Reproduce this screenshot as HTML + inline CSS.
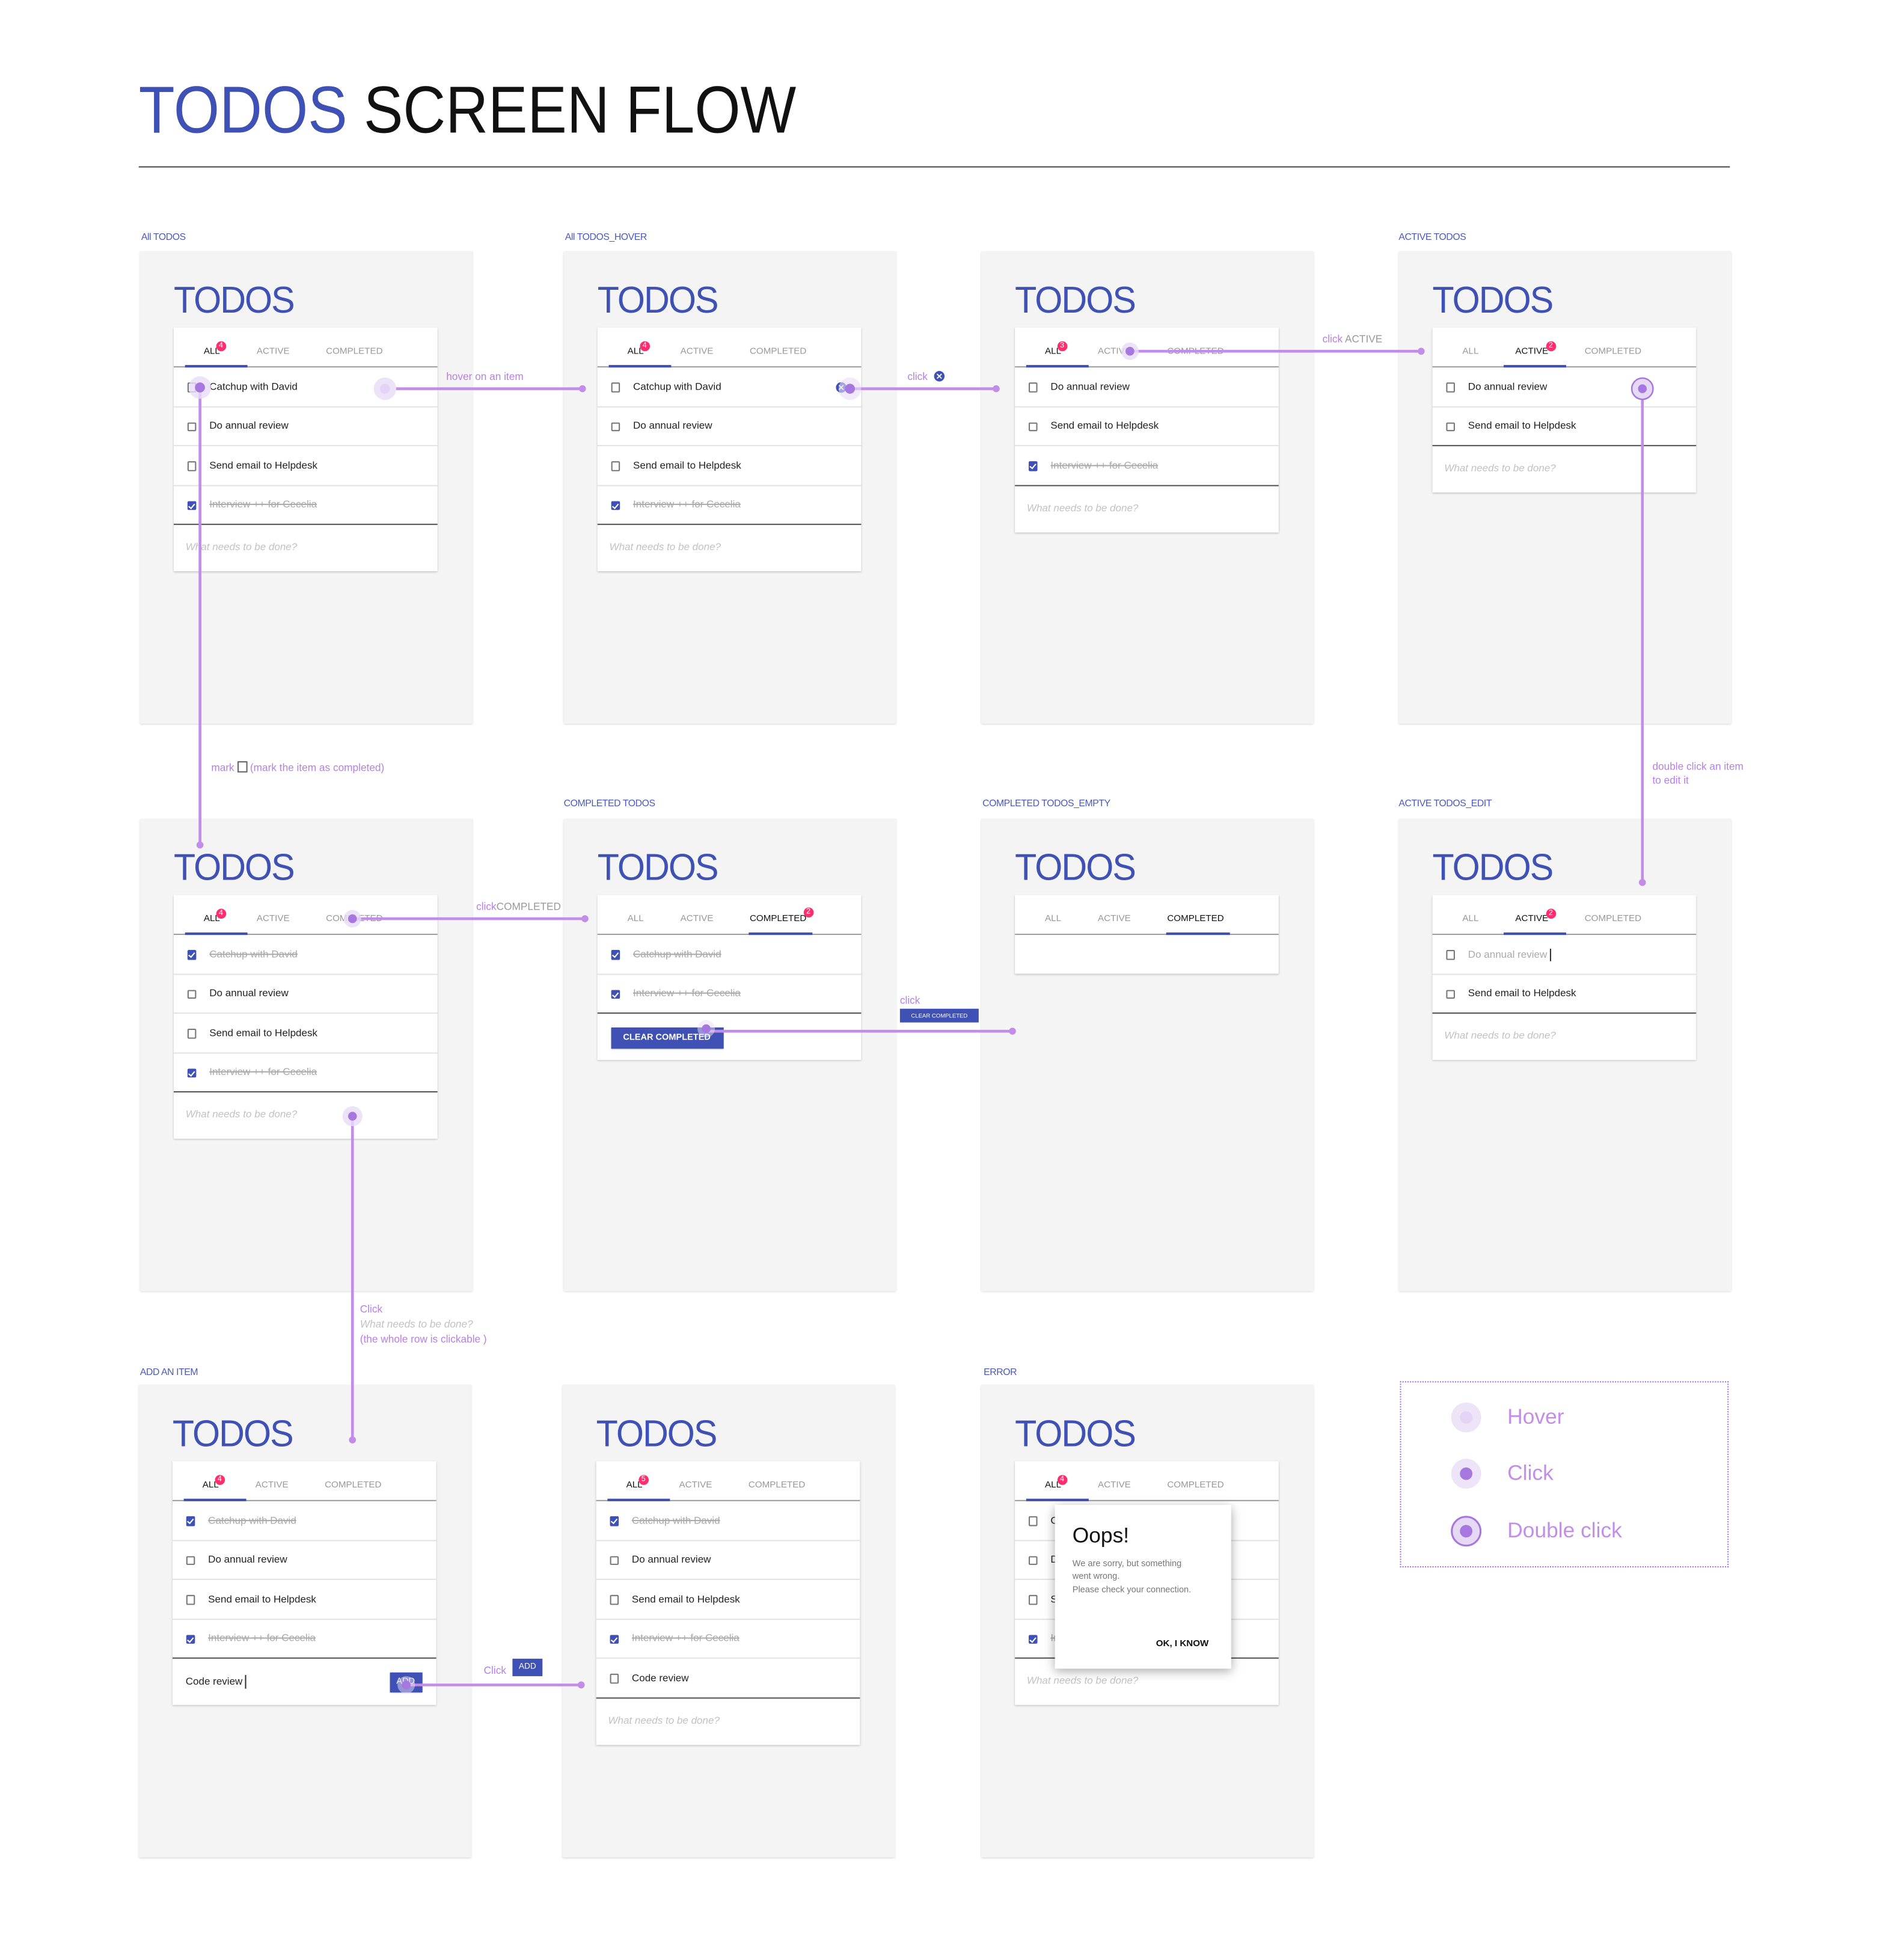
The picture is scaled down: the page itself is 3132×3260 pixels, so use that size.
<!DOCTYPE html>
<html><head><meta charset="utf-8"><style>
html,body{margin:0;padding:0;background:#fff;}
body{width:3132px;height:3260px;overflow:hidden;position:relative;font-family:"Liberation Sans",sans-serif;}
#s{position:absolute;left:0;top:0;width:1507px;height:1568px;transform:scale(2.079);transform-origin:0 0;}
.abs{position:absolute;}
.lbl{position:absolute;font-size:7.6px;color:#4a58c0;white-space:nowrap;letter-spacing:-0.2px;}
.card{position:absolute;width:266px;height:378px;background:#f4f4f4;box-shadow:0 0.5px 1.5px rgba(0,0,0,.18);}
.t{position:absolute;left:27px;top:25px;font-size:30px;line-height:30px;color:#3f51b5;letter-spacing:-1px;transform:scaleX(0.95);transform-origin:0 0;}
.p{position:absolute;left:26.5px;top:61px;width:211px;background:#fff;box-shadow:0 0.6px 1.6px rgba(0,0,0,.22);}
.tabs{position:relative;height:31px;border-bottom:0.8px solid #9e9e9e;}
.tab{position:absolute;top:14px;font-size:7.3px;line-height:9px;color:#999;text-align:center;white-space:nowrap;}
.tab.on{color:#111;}
.ta{left:11px;width:40px;} .tb{left:55px;width:50px;} .tc{left:112px;width:66px;}
.ul{position:absolute;bottom:-0.8px;height:1.5px;background:#3f51b5;}
.bd{position:absolute;width:8.5px;height:8.5px;border-radius:50%;background:#ff2e6e;color:#fff;font-size:6px;line-height:8.5px;text-align:center;}
.r{position:relative;height:31.6px;border-bottom:0.6px solid #e3e3e3;box-sizing:border-box;}
.r.last{border-bottom:0.9px solid #555;}
.cb{position:absolute;left:11px;top:12px;width:7.5px;height:7.5px;border:1px solid #777;box-sizing:border-box;border-radius:1px;background:#fff;}
.cb.on{background:#3f51b5;border-color:#3f51b5;}
.cb.on:after{content:"";position:absolute;left:1.6px;top:0.3px;width:1.8px;height:3.6px;border:solid #fff;border-width:0 0.9px 0.9px 0;transform:rotate(40deg);}
.tx{position:absolute;left:29px;top:10.5px;font-size:8.2px;line-height:10px;color:#222;white-space:nowrap;}
.dn{color:#aaa;text-decoration:line-through;}
.in{position:relative;height:37px;}
.ph{position:absolute;left:10px;top:13px;font-size:8.2px;font-style:italic;color:#c2c2c2;white-space:nowrap;}
.ann{position:absolute;font-size:8.3px;color:#b77fe6;white-space:nowrap;}
</style></head><body><div id="s">

<div class="abs" style="left:111px;top:62px;font-size:53px;line-height:53px;white-space:nowrap;transform:scaleX(0.89);transform-origin:0 0;"><span style="color:#3f51b5">TODOS</span> <span style="color:#111">SCREEN FLOW</span></div>
<div class="abs" style="left:111px;top:133px;width:1273px;height:1.4px;background:#4a4a4a"></div>

<div class="lbl" style="left:113px;top:185px">All TODOS</div>
<div class="lbl" style="left:452px;top:185px">All TODOS_HOVER</div>
<div class="lbl" style="left:1119px;top:185px">ACTIVE TODOS</div>
<div class="lbl" style="left:451px;top:638px">COMPLETED TODOS</div>
<div class="lbl" style="left:786px;top:638px">COMPLETED TODOS_EMPTY</div>
<div class="lbl" style="left:1119px;top:638px">ACTIVE TODOS_EDIT</div>
<div class="lbl" style="left:112px;top:1093px">ADD AN ITEM</div>
<div class="lbl" style="left:787px;top:1093px">ERROR</div>

<!-- A -->
<div class="card" style="left:112px;top:201px"><div class="t">TODOS</div><div class="p">
<div class="tabs"><span class="tab ta on">ALL</span><span class="tab tb">ACTIVE</span><span class="tab tc">COMPLETED</span><div class="ul" style="left:9px;width:50px"></div><div class="bd" style="left:34px;top:10.5px">4</div></div>
<div class="r"><div class="cb"></div><div class="tx">Catchup with David</div></div>
<div class="r"><div class="cb"></div><div class="tx">Do annual review</div></div>
<div class="r"><div class="cb"></div><div class="tx">Send email to Helpdesk</div></div>
<div class="r last"><div class="cb on"></div><div class="tx dn">Interview ++ for Cecelia</div></div>
<div class="in"><div class="ph">What needs to be done?</div></div></div></div>

<!-- B -->
<div class="card" style="left:451px;top:201px"><div class="t">TODOS</div><div class="p">
<div class="tabs"><span class="tab ta on">ALL</span><span class="tab tb">ACTIVE</span><span class="tab tc">COMPLETED</span><div class="ul" style="left:9px;width:50px"></div><div class="bd" style="left:34px;top:10.5px">4</div></div>
<div class="r"><div class="cb"></div><div class="tx">Catchup with David</div></div>
<div class="r"><div class="cb"></div><div class="tx">Do annual review</div></div>
<div class="r"><div class="cb"></div><div class="tx">Send email to Helpdesk</div></div>
<div class="r last"><div class="cb on"></div><div class="tx dn">Interview ++ for Cecelia</div></div>
<div class="in"><div class="ph">What needs to be done?</div></div></div></div>

<!-- C -->
<div class="card" style="left:785px;top:201px"><div class="t">TODOS</div><div class="p">
<div class="tabs"><span class="tab ta on">ALL</span><span class="tab tb">ACTIVE</span><span class="tab tc">COMPLETED</span><div class="ul" style="left:9px;width:50px"></div><div class="bd" style="left:34px;top:10.5px">3</div></div>
<div class="r"><div class="cb"></div><div class="tx">Do annual review</div></div>
<div class="r"><div class="cb"></div><div class="tx">Send email to Helpdesk</div></div>
<div class="r last"><div class="cb on"></div><div class="tx dn">Interview ++ for Cecelia</div></div>
<div class="in"><div class="ph">What needs to be done?</div></div></div></div>

<!-- D -->
<div class="card" style="left:1119px;top:201px"><div class="t">TODOS</div><div class="p">
<div class="tabs"><span class="tab ta">ALL</span><span class="tab tb on">ACTIVE</span><span class="tab tc">COMPLETED</span><div class="ul" style="left:57px;width:50px"></div><div class="bd" style="left:91px;top:10.5px">2</div></div>
<div class="r"><div class="cb"></div><div class="tx">Do annual review</div></div>
<div class="r last"><div class="cb"></div><div class="tx">Send email to Helpdesk</div></div>
<div class="in"><div class="ph">What needs to be done?</div></div></div></div>

<!-- E -->
<div class="card" style="left:112px;top:655px"><div class="t">TODOS</div><div class="p">
<div class="tabs"><span class="tab ta on">ALL</span><span class="tab tb">ACTIVE</span><span class="tab tc">COMPLETED</span><div class="ul" style="left:9px;width:50px"></div><div class="bd" style="left:34px;top:10.5px">4</div></div>
<div class="r"><div class="cb on"></div><div class="tx dn">Catchup with David</div></div>
<div class="r"><div class="cb"></div><div class="tx">Do annual review</div></div>
<div class="r"><div class="cb"></div><div class="tx">Send email to Helpdesk</div></div>
<div class="r last"><div class="cb on"></div><div class="tx dn">Interview ++ for Cecelia</div></div>
<div class="in"><div class="ph">What needs to be done?</div></div></div></div>

<!-- F -->
<div class="card" style="left:451px;top:655px"><div class="t">TODOS</div><div class="p">
<div class="tabs"><span class="tab ta">ALL</span><span class="tab tb">ACTIVE</span><span class="tab tc on">COMPLETED</span><div class="ul" style="left:121px;width:51px"></div><div class="bd" style="left:165px;top:9.5px">2</div></div>
<div class="r"><div class="cb on"></div><div class="tx dn">Catchup with David</div></div>
<div class="r last"><div class="cb on"></div><div class="tx dn">Interview ++ for Cecelia</div></div>
<div class="in"><div class="abs" style="left:11px;top:10.5px;width:90px;height:17px;background:#3f51b5;box-shadow:0 0.6px 1px rgba(0,0,0,.3);color:#fff;font-size:7px;line-height:17px;text-align:center;font-weight:bold">CLEAR COMPLETED</div></div></div></div>

<!-- G -->
<div class="card" style="left:785px;top:655px"><div class="t">TODOS</div><div class="p">
<div class="tabs"><span class="tab ta">ALL</span><span class="tab tb">ACTIVE</span><span class="tab tc on">COMPLETED</span><div class="ul" style="left:121px;width:51px"></div></div>
<div style="height:31px"></div></div></div>

<!-- H -->
<div class="card" style="left:1119px;top:655px"><div class="t">TODOS</div><div class="p">
<div class="tabs"><span class="tab ta">ALL</span><span class="tab tb on">ACTIVE</span><span class="tab tc">COMPLETED</span><div class="ul" style="left:57px;width:50px"></div><div class="bd" style="left:91px;top:10.5px">2</div></div>
<div class="r"><div class="cb"></div><div class="tx" style="color:#aaa">Do annual review <span style="display:inline-block;width:0.6px;height:10px;background:#333;vertical-align:middle"></span></div></div>
<div class="r last"><div class="cb"></div><div class="tx">Send email to Helpdesk</div></div>
<div class="in"><div class="ph">What needs to be done?</div></div></div></div>

<!-- I -->
<div class="card" style="left:111px;top:1108px"><div class="t">TODOS</div><div class="p">
<div class="tabs"><span class="tab ta on">ALL</span><span class="tab tb">ACTIVE</span><span class="tab tc">COMPLETED</span><div class="ul" style="left:9px;width:50px"></div><div class="bd" style="left:34px;top:10.5px">4</div></div>
<div class="r"><div class="cb on"></div><div class="tx dn">Catchup with David</div></div>
<div class="r"><div class="cb"></div><div class="tx">Do annual review</div></div>
<div class="r"><div class="cb"></div><div class="tx">Send email to Helpdesk</div></div>
<div class="r last"><div class="cb on"></div><div class="tx dn">Interview ++ for Cecelia</div></div>
<div class="in"><div class="tx" style="left:11px;top:13px">Code review <span style="display:inline-block;width:0.6px;height:11px;background:#333;vertical-align:middle"></span></div><div class="abs" style="left:174px;top:10.5px;width:26px;height:16px;background:#3f51b5;color:#fff;font-size:7px;line-height:16px;text-align:center;box-shadow:0 0.6px 1px rgba(0,0,0,.3)">ADD</div></div></div></div>

<!-- J -->
<div class="card" style="left:450px;top:1108px"><div class="t">TODOS</div><div class="p">
<div class="tabs"><span class="tab ta on">ALL</span><span class="tab tb">ACTIVE</span><span class="tab tc">COMPLETED</span><div class="ul" style="left:9px;width:50px"></div><div class="bd" style="left:34px;top:10.5px">5</div></div>
<div class="r"><div class="cb on"></div><div class="tx dn">Catchup with David</div></div>
<div class="r"><div class="cb"></div><div class="tx">Do annual review</div></div>
<div class="r"><div class="cb"></div><div class="tx">Send email to Helpdesk</div></div>
<div class="r"><div class="cb on"></div><div class="tx dn">Interview ++ for Cecelia</div></div>
<div class="r last"><div class="cb"></div><div class="tx">Code review</div></div>
<div class="in"><div class="ph">What needs to be done?</div></div></div></div>

<!-- K -->
<div class="card" style="left:785px;top:1108px"><div class="t">TODOS</div><div class="p">
<div class="tabs"><span class="tab ta on">ALL</span><span class="tab tb">ACTIVE</span><span class="tab tc">COMPLETED</span><div class="ul" style="left:9px;width:50px"></div><div class="bd" style="left:34px;top:10.5px">4</div></div>
<div class="r"><div class="cb"></div><div class="tx">Catchup with David</div></div>
<div class="r"><div class="cb"></div><div class="tx">Do annual review</div></div>
<div class="r"><div class="cb"></div><div class="tx">Send email to Helpdesk</div></div>
<div class="r last"><div class="cb on"></div><div class="tx dn">Interview ++ for Cecelia</div></div>
<div class="in"><div class="ph">What needs to be done?</div></div></div>
<div class="abs" style="left:59px;top:96px;width:141px;height:131px;background:#fff;box-shadow:0 2px 8px rgba(0,0,0,.35)">
<div class="abs" style="left:14px;top:16px;font-size:17px;line-height:18px;color:#111">Oops!</div>
<div class="abs" style="left:14px;top:43px;font-size:7px;line-height:10.4px;color:#777;width:125px">We are sorry, but something<br>went wrong.<br>Please check your connection.</div>
<div class="abs" style="right:18px;top:106px;font-size:7.3px;font-weight:bold;color:#111">OK, I KNOW</div>
</div></div>

<!-- legend -->
<div class="abs" style="left:1120px;top:1105px;width:261px;height:147px;border:1.2px dotted #a874e0"></div>

<svg class="abs" style="left:0;top:0" width="1500" height="1561" viewBox="0 0 1500 1561">
<g stroke="#c18de9" stroke-width="2.2" fill="none">
<line x1="308" y1="311" x2="466" y2="311"/>
<line x1="160" y1="310" x2="160" y2="676"/>
<line x1="680" y1="311" x2="797" y2="311"/>
<line x1="904" y1="281" x2="1137" y2="281"/>
<line x1="1314" y1="311" x2="1314" y2="706"/>
<line x1="282" y1="735" x2="468" y2="735"/>
<line x1="565" y1="825" x2="810" y2="825"/>
<line x1="282" y1="893" x2="282" y2="1152"/>
<line x1="325" y1="1348" x2="465" y2="1348"/>
</g>
<g fill="#c18de9">
<circle cx="466" cy="311" r="2.8"/><circle cx="160" cy="676" r="2.8"/><circle cx="797" cy="311" r="2.8"/><circle cx="1137" cy="281" r="2.8"/><circle cx="1314" cy="706" r="2.8"/><circle cx="468" cy="735" r="2.8"/><circle cx="810" cy="825" r="2.8"/><circle cx="282" cy="1152" r="2.8"/><circle cx="465" cy="1348" r="2.8"/>
</g>
<circle cx="308" cy="311" r="9" fill="#ece3f8"/><circle cx="308" cy="311" r="4" fill="#e3d4f5"/>
<g>
<circle cx="160" cy="310" r="9" fill="#e9dcf7" fill-opacity=".8"/><circle cx="160" cy="310" r="4" fill="#a677de"/>
<circle cx="673" cy="310" r="4.2" fill="#3f51b5"/><path d="M671.2 308.2l3.6 3.6M674.8 308.2l-3.6 3.6" stroke="#fff" stroke-width="0.9"/>
<circle cx="680" cy="311" r="9" fill="#e9dcf7" fill-opacity=".6"/><circle cx="680" cy="311" r="4" fill="#a677de"/>
<circle cx="904" cy="281" r="7" fill="#e9dcf7" fill-opacity=".8"/><circle cx="904" cy="281" r="3.5" fill="#a677de"/>
<circle cx="282" cy="735" r="7" fill="#e9dcf7" fill-opacity=".8"/><circle cx="282" cy="735" r="3.5" fill="#a677de"/>
<circle cx="282" cy="893" r="8" fill="#e9dcf7" fill-opacity=".8"/><circle cx="282" cy="893" r="3.5" fill="#a677de"/>
<circle cx="565" cy="823" r="7" fill="#e9dcf7" fill-opacity=".5"/><circle cx="565" cy="823" r="3.5" fill="#a677de"/>
<circle cx="325" cy="1348" r="7" fill="#e9dcf7" fill-opacity=".5"/><circle cx="325" cy="1348" r="3.5" fill="#a677de"/>
<circle cx="1314" cy="311" r="8.5" fill="#e6d9f6" stroke="#a677de" stroke-width="1.2"/><circle cx="1314" cy="311" r="3.5" fill="#a677de"/>
<circle cx="751.5" cy="301" r="4.2" fill="#3f51b5"/><path d="M749.7 299.2l3.6 3.6M753.3 299.2l-3.6 3.6" stroke="#fff" stroke-width="0.9"/>
</g>
<circle cx="1173" cy="1134" r="12" fill="#ede4f8"/><circle cx="1173" cy="1134" r="5" fill="#e3d4f5"/>
<circle cx="1173" cy="1179" r="12" fill="#ede4f8"/><circle cx="1173" cy="1179" r="5" fill="#a677de"/>
<circle cx="1173" cy="1225" r="11.5" fill="#e6d9f6" stroke="#a677de" stroke-width="1.5"/><circle cx="1173" cy="1225" r="5" fill="#a677de"/>
</svg>

<div class="ann" style="left:357px;top:296px">hover on an item</div>
<div class="ann" style="left:726px;top:296px">click</div>
<div class="ann" style="left:1058px;top:266px">click <span style="color:#999">ACTIVE</span></div>
<div class="ann" style="left:169px;top:609px">mark <span style="display:inline-block;width:6px;height:7px;border:0.9px solid #666;vertical-align:-1px"></span> (mark the item as completed)</div>
<div class="ann" style="left:1322px;top:608px;line-height:11px">double click an item<br>to edit it</div>
<div class="ann" style="left:381px;top:720px">click<span style="color:#999">COMPLETED</span></div>
<div class="ann" style="left:720px;top:795px">click</div>
<div class="abs" style="left:720px;top:807px;width:63px;height:11px;background:#3f51b5;color:#fff;font-size:4.6px;line-height:11px;text-align:center">CLEAR COMPLETED</div>
<div class="ann" style="left:288px;top:1041px;line-height:12px">Click<br><span style="color:#c2c2c2;font-style:italic">What needs to be done?</span><br>(the whole row is clickable )</div>
<div class="ann" style="left:387px;top:1331px">Click</div>
<div class="abs" style="left:410px;top:1327px;width:24px;height:14px;background:#3f51b5;color:#fff;font-size:6.6px;line-height:14px;text-align:center">ADD</div>

<div class="abs" style="left:1206px;top:1124px;font-size:17px;color:#c38ee8">Hover</div>
<div class="abs" style="left:1206px;top:1169px;font-size:17px;color:#c38ee8">Click</div>
<div class="abs" style="left:1206px;top:1215px;font-size:17px;color:#c38ee8">Double click</div>

</div></body></html>
